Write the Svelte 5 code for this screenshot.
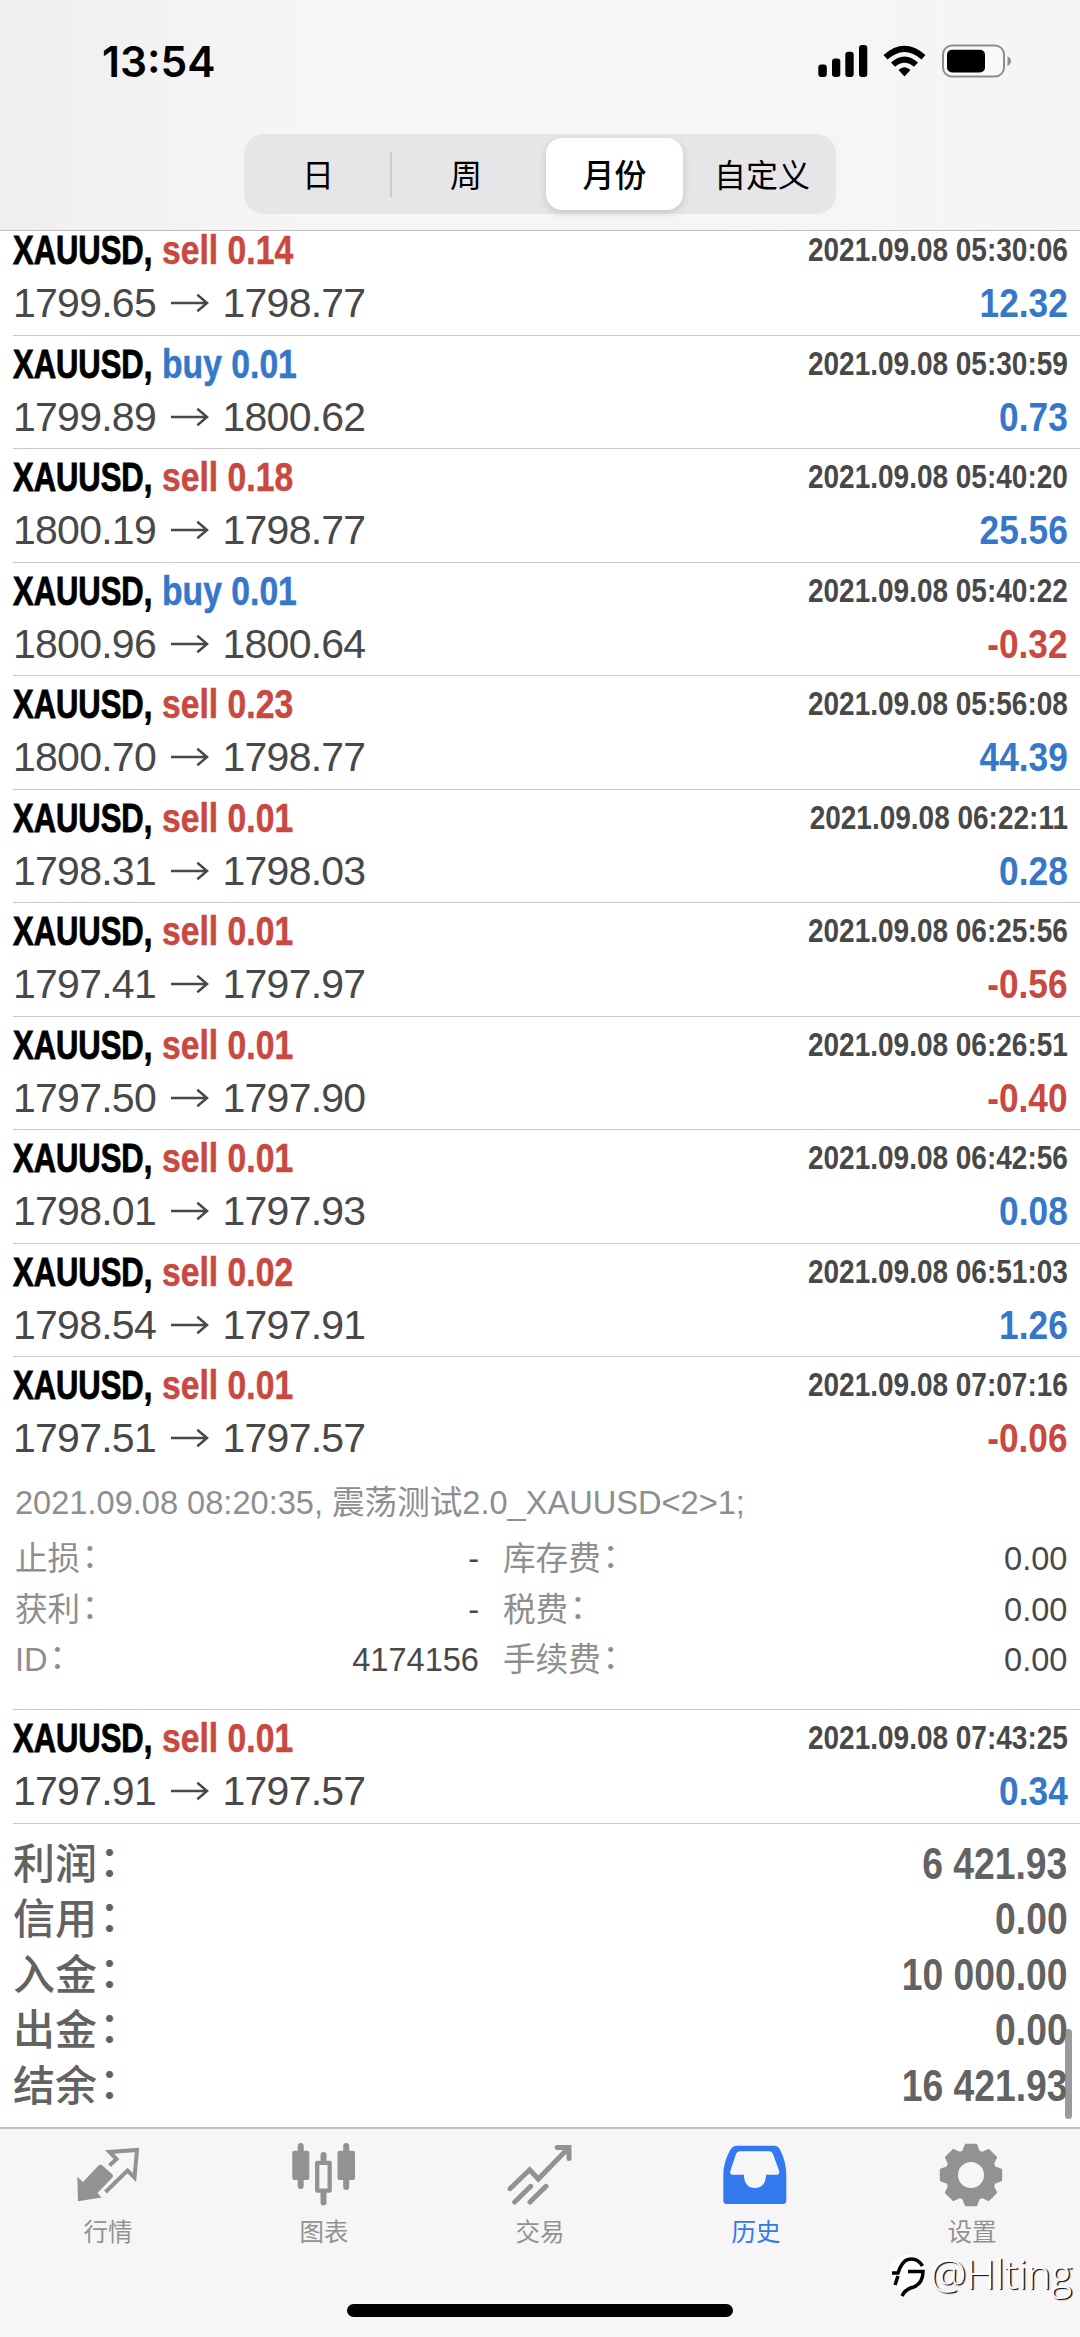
<script>
  const ranges = ['日', '周', '月份', '自定义'];
  let range = '月份';
  let tab = '历史';

  const deals = [
    { side: 'sell', lots: '0.14', from: '1799.65', to: '1798.77', time: '2021.09.08 05:30:06', profit: '12.32' },
    { side: 'buy', lots: '0.01', from: '1799.89', to: '1800.62', time: '2021.09.08 05:30:59', profit: '0.73' },
    { side: 'sell', lots: '0.18', from: '1800.19', to: '1798.77', time: '2021.09.08 05:40:20', profit: '25.56' },
    { side: 'buy', lots: '0.01', from: '1800.96', to: '1800.64', time: '2021.09.08 05:40:22', profit: '-0.32' },
    { side: 'sell', lots: '0.23', from: '1800.70', to: '1798.77', time: '2021.09.08 05:56:08', profit: '44.39' },
    { side: 'sell', lots: '0.01', from: '1798.31', to: '1798.03', time: '2021.09.08 06:22:11', profit: '0.28' },
    { side: 'sell', lots: '0.01', from: '1797.41', to: '1797.97', time: '2021.09.08 06:25:56', profit: '-0.56' },
    { side: 'sell', lots: '0.01', from: '1797.50', to: '1797.90', time: '2021.09.08 06:26:51', profit: '-0.40' },
    { side: 'sell', lots: '0.01', from: '1798.01', to: '1797.93', time: '2021.09.08 06:42:56', profit: '0.08' },
    { side: 'sell', lots: '0.02', from: '1798.54', to: '1797.91', time: '2021.09.08 06:51:03', profit: '1.26' },
    {
      side: 'sell', lots: '0.01', from: '1797.51', to: '1797.57', time: '2021.09.08 07:07:16', profit: '-0.06',
      details: {
        comment: '2021.09.08 08:20:35, 震荡测试2.0_XAUUSD<2>1;',
        fields: [
          ['止损', '-', '库存费', '0.00'],
          ['获利', '-', '税费', '0.00'],
          ['ID', '4174156', '手续费', '0.00']
        ]
      }
    },
    { side: 'sell', lots: '0.01', from: '1797.91', to: '1797.57', time: '2021.09.08 07:43:25', profit: '0.34' }
  ];

  const totals = [
    ['利润', '6 421.93'],
    ['信用', '0.00'],
    ['入金', '10 000.00'],
    ['出金', '0.00'],
    ['结余', '16 421.93']
  ];

  const tabs = ['行情', '图表', '交易', '历史', '设置'];

  // eight teeth: base, tip, tip, base
  const gear = Array.from({ length: 8 }, (_, k) =>
    [[-18, 24.8], [-10, 30.7], [10, 30.7], [18, 24.8]].map(([deg, r]) => {
      const a = ((k * 45 + deg) * Math.PI) / 180;
      return `${(34 + r * Math.sin(a)).toFixed(1)} ${(32 - r * Math.cos(a)).toFixed(1)}`;
    })
  ).flat().join('L');
</script>

<div class="screen" lang="zh-CN">
  <header>
    <div class="status">
      <span class="clock">13:54</span>
      <svg class="indicators" viewBox="0 0 194 34">
        <rect x="0.3" y="20.5" width="8.5" height="12.5" rx="3" />
        <rect x="14" y="14.5" width="8.3" height="18.5" rx="3" />
        <rect x="27.3" y="7.7" width="8.4" height="25.3" rx="3" />
        <rect x="41" y="1" width="8.3" height="32" rx="3" />
        <path d="M65.5 11 Q86.500 -7.500 107.500 11 L103.500 15.500 Q86.500 0.500 69.500 15.500Z M73 18.500 Q86.500 6.500 100 18.500 L96 22.800 Q86.500 14.500 77 22.800Z M80.500 26 Q86.500 20.500 92.500 26 L86.500 32.500Z" />
        <rect x="125" y="1.5" width="61" height="31" rx="9" fill="#fafafa" stroke="#8d8d8d" stroke-width="2" />
        <rect x="129" y="5.7" width="38" height="22.800" rx="5" />
        <path d="M189.500 12.500 q3.500 1.500 3.500 4.700 t-3.500 4.700z" fill="#8d8d8d" />
      </svg>
    </div>
    <div class="segments">
      {#each ranges as name}
        <button class:active={range === name} on:click={() => (range = name)}>{name}</button>
      {/each}
    </div>
  </header>

  <main>
    {#each deals as deal}
      <section class="deal">
        <div class="line title">
          <span><b class="symbol">XAUUSD,</b><b class="side {deal.side}">{deal.side} {deal.lots}</b></span>
          <b class="time">{deal.time}</b>
        </div>
        <div class="line prices">
          <span class="move">
            {deal.from}<svg class="arrow" viewBox="0 0 40 20"><path d="M1 10H38M28 1.500L38 10L28 18.500" /></svg>{deal.to}
          </span>
          <b class="profit" class:loss={deal.profit.startsWith('-')}>{deal.profit}</b>
        </div>
        {#if deal.details}
          <div class="details">
            <p>{deal.details.comment}</p>
            {#each deal.details.fields as [left, leftValue, right, rightValue]}
              <div class="fields">
                <span>{left}<i>：</i></span>
                <em>{leftValue}</em>
                <span class="second">{right}<i>：</i></span>
                <em>{rightValue}</em>
              </div>
            {/each}
          </div>
        {/if}
      </section>
    {/each}

    <section class="totals">
      {#each totals as [label, value]}
        <div class="total"><span>{label}<i>：</i></span><b>{value}</b></div>
      {/each}
    </section>
    <div class="scrollbar"></div>
  </main>

  <nav>
    {#each tabs as name, i}
      <button class="tab" class:current={tab === name} on:click={() => (tab = name)}>
        <svg viewBox="0 0 70 70">
          {#if i === 0}
            <path d="M4.300 33.700L10 39L25 23Q27.500 20.500 30 23L39 31Q41 33 39 35L24.500 50L28.500 54.500L5 58.300Z" fill="currentColor" />
            <path d="M36.500 22.500L43.500 16L36.500 9L64 7L61.500 34.500L54.500 27.500L32.500 49" class="stroke thin" />
          {:else if i === 1}
            <path d="M11.700 3V43M57.200 3V44M34.500 12V19M34.500 50V59.500" class="stroke candle" />
            <rect x="3.3" y="7.7" width="17" height="29.300" rx="2" fill="currentColor" />
            <rect x="48.5" y="7.7" width="17.500" height="29.300" rx="2" fill="currentColor" />
            <rect x="28.2" y="19.8" width="12.500" height="27.800" class="stroke hollow" />
          {:else if i === 2}
            <path d="M5 45.700L24.700 26.700L33.300 36L63 5.500M52.300 4.500H64V15.500M9.700 59L25.700 43.300M25 59L41 43.300" class="stroke" />
          {:else if i === 3}
            <path fill-rule="evenodd" d="M16 2.700H53.500Q57 2.700 59 6.500Q65.300 19 65.300 32V57.500Q65.300 61 62 61H5.800Q2.300 61 2.300 57.500V32Q2.300 19 9.500 6.500Q11.500 2.700 16 2.700ZM18.500 8.300Q16 8.300 15 11L9.500 27.500Q8.500 31.700 11 31.700H22.800Q23.500 45 34 45Q44.500 45 45.200 31.700H56.500Q59 31.700 58 27.500L52 11Q51 8.300 48.500 8.300Z" fill="currentColor" />
          {:else}
            <path class="gear" fill-rule="evenodd" d="M{gear}ZM34 18A14 14 0 1 0 34 46A14 14 0 1 0 34 18Z" />
          {/if}
        </svg>
        {name}
      </button>
    {/each}
    <div class="home"></div>
    <div class="mark">
      <svg viewBox="0 0 40 46">
        <circle cx="18" cy="22" r="18" />
        <path d="M2 22H8Q12 10 18 8.500Q27 6 32.500 15M8 25L5 34M18 20.500H33Q33 32 24 36Q15 38 12 45" />
      </svg>
      <span>@Hlting</span>
    </div>
  </nav>
</div>

<style>
  :global(body) {
    margin: 0;
    background: #fff;
  }

  .screen {
    width: 1080px;
    height: 2337px;
    display: flex;
    flex-direction: column;
    overflow: hidden;
    font-family: "Liberation Sans", "Noto Sans CJK SC", sans-serif;
    color: #484848;
  }

  button {
    border: 0;
    padding: 0;
    background: none;
    font-family: inherit;
    cursor: pointer;
  }

  /* full-width colon, nudged up to the middle of the label */
  i {
    display: inline-block;
    font-style: normal;
    transform: translate(0.05em, -0.08em);
  }

  header {
    box-sizing: border-box;
    height: 231px;
    flex: none;
    border-bottom: 1px solid #bfbfc1;
    background: linear-gradient(90deg, #efeff0, #f7f6f7 30%, #f6f6f6 60%, #f5f5f8);
  }

  .status {
    height: 134px;
    box-sizing: border-box;
    padding: 36px 68px 0 102px;
    display: flex;
    justify-content: space-between;
    align-items: flex-start;
  }

  .clock {
    font: 600 42.500px/52px Inter, sans-serif;
    color: #000;
  }

  .indicators {
    width: 194px;
    height: 34px;
    margin-top: 8px;
  }

  .segments {
    width: 592px;
    height: 80px;
    box-sizing: border-box;
    margin-left: 244px;
    padding: 4px 0;
    display: grid;
    grid-template-columns: repeat(4, 1fr);
    background: #e6e6e8;
    border-radius: 20px;
  }

  .segments button {
    position: relative;
    padding-bottom: 2px;
    font-size: 32px;
    color: #000;
    border-radius: 16px;
  }

  .segments button:first-child::after {
    content: '';
    position: absolute;
    right: 0;
    top: 14px;
    width: 2px;
    height: 45px;
    background: #cbcbcf;
  }

  .segments .active {
    margin: 0 5px 0 6px;
    background: #fff;
    font-weight: 500;
    box-shadow: 0 3px 8px rgba(0, 0, 0, 0.14);
  }

  main {
    position: relative;
    height: 1896px;
    flex: none;
    padding-left: 13px;
  }

  .deal {
    display: flow-root;
    box-sizing: border-box;
    height: 113.55px;
    padding: 6px 12.500px 0 0;
    border-bottom: 1px solid #c8c8c9;
  }

  .deal:first-child {
    height: 104.500px;
    padding-top: 0;
  }

  .deal:first-child .title {
    margin-top: -3px;
  }

  .deal:has(.details) {
    height: 353px;
  }

  .line {
    display: flex;
    justify-content: space-between;
    align-items: baseline;
    white-space: nowrap;
  }

  .title {
    height: 52px;
    line-height: 44px;
  }

  .symbol,
  .side {
    display: inline-block;
    font-size: 41.500px;
    transform-origin: 0 50%;
    -webkit-text-stroke: 0.9px currentColor;
  }

  .symbol {
    width: 149px;
    color: #000;
    transform: scaleX(0.746);
  }

  .side {
    transform: scaleX(0.812);
    -webkit-text-stroke-width: 0.5px;
  }

  .sell,
  .loss {
    color: #c9483f;
  }

  .buy {
    color: #3577c8;
  }

  .time {
    font-size: 33.800px;
    transform: translateY(-3px) scaleX(0.828);
    transform-origin: 100% 50%;
  }

  .prices {
    font-size: 41px;
    line-height: 46px;
  }

  .move {
    letter-spacing: -0.750px;
  }

  .arrow {
    width: 39px;
    height: 20px;
    margin: 0 13px 4px 14.500px;
    fill: none;
    stroke: currentColor;
    stroke-width: 2.500;
  }

  .profit {
    font-size: 41.500px;
    color: #3577c8;
    transform: scaleX(0.85);
    transform-origin: 100% 50%;
  }

  .profit.loss {
    color: #c9483f;
  }

  .details {
    padding: 17px 0 0 2px;
    font-size: 32.600px;
    color: #8e8e8e;
  }

  .details p {
    margin: 0 0 6px;
    line-height: 50px;
  }

  .fields {
    display: grid;
    grid-template-columns: 120px 344px 250px 338.500px;
    line-height: 50.500px;
  }

  .fields em {
    font-style: normal;
    text-align: right;
    color: #484848;
  }

  .second {
    padding-left: 24px;
  }

  .totals {
    padding: 13px 12.500px 0 0;
    color: #626262;
  }

  .total {
    height: 55.500px;
    display: flex;
    justify-content: space-between;
    font-size: 42px;
    line-height: 55.500px;
  }

  .total span {
    font-weight: 500;
  }

  .total b {
    font-size: 43.500px;
    transform: scaleX(0.857);
    transform-origin: 100% 50%;
  }

  .scrollbar {
    position: absolute;
    right: 8px;
    bottom: 8px;
    width: 7px;
    height: 90px;
    border-radius: 4px;
    background: rgba(120, 120, 120, 0.75);
  }

  nav {
    position: relative;
    box-sizing: border-box;
    flex: 1;
    display: grid;
    grid-template-columns: repeat(5, 1fr);
    align-items: start;
    border-top: 2px solid #c3c3c4;
    background: #f6f6f6;
  }

  .tab {
    padding-top: 14px;
    display: flex;
    flex-direction: column;
    align-items: center;
    font-size: 24.500px;
    line-height: 36px;
    color: #929292;
  }

  .tab svg {
    width: 70px;
    height: 70px;
    margin-bottom: 2px;
  }

  .stroke {
    fill: none;
    stroke: currentColor;
    stroke-width: 5;
    stroke-linecap: round;
  }

  .thin {
    stroke-width: 4;
    stroke-linecap: butt;
  }

  .candle {
    stroke-width: 6;
  }

  .hollow {
    stroke-width: 4.300;
    stroke-linejoin: round;
  }

  .gear {
    fill: currentColor;
    stroke: currentColor;
    stroke-width: 2;
    stroke-linejoin: round;
  }

  .current {
    color: #3478f0;
  }

  .home {
    position: absolute;
    left: 347px;
    bottom: 20px;
    width: 386px;
    height: 13px;
    border-radius: 7px;
    background: #000;
  }

  .mark {
    position: absolute;
    right: 8px;
    top: 122px;
    display: flex;
    align-items: center;
    font: 300 40.500px/46px "Open Sans", sans-serif;
    color: #fff;
    text-shadow: 1.500px 1px 1px #000;
  }

  .mark svg {
    width: 40px;
    height: 46px;
    fill: none;
    stroke: #000;
    stroke-width: 3.500;
  }

  .mark circle {
    fill: #fff;
    stroke: none;
  }
</style>
